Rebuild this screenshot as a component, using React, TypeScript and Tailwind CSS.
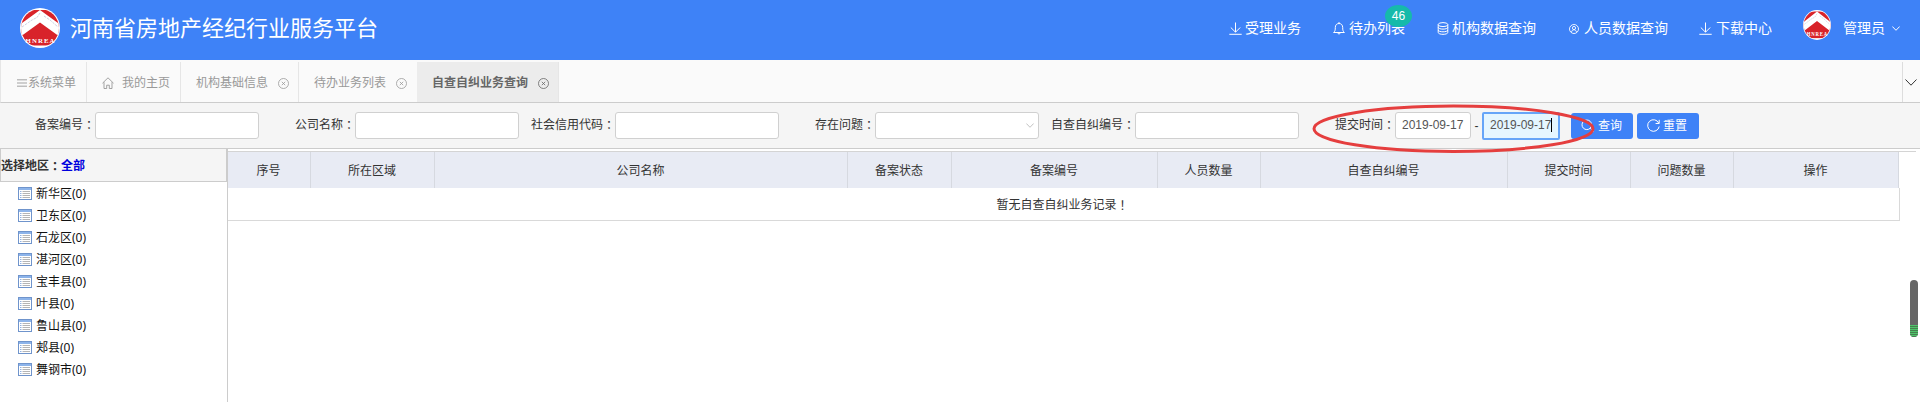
import type { ReactNode } from "react";

type IconProps = { className?: string };

function Logo({ className = "" }: IconProps) {
  return (
    <svg viewBox="0 0 40 40" preserveAspectRatio="none" className={className}>
      <defs>
        <clipPath id="disc">
          <circle cx="20" cy="20" r="19" />
        </clipPath>
      </defs>
      <circle cx="20" cy="20" r="20" fill="#fff" />
      <g clipPath="url(#disc)">
        <rect y="2" width="40" height="35.5" fill="#d8232a" />
        <path d="M20 2 L42 18 V30.5 L20 14.5 L-2 30.5 V18 Z" fill="#fff" />
        <path d="M2 19 L12 12 L17 9.5 L20 5 M24 8 L30 12 L38 19" stroke="#b9bfd4" strokeWidth=".7" fill="none" strokeDasharray="2.5 1" />
      </g>
      <text x="20" y="35" textAnchor="middle" textLength="29" fontSize="6.8" fontWeight="700" fontFamily="Liberation Serif, serif" fill="#fff">
        HNREA
      </text>
    </svg>
  );
}

function DownIcon() {
  return (
    <svg viewBox="0 0 13 13" className="h-[13px] w-[13px]" fill="none" stroke="currentColor">
      <path d="M6.5 .5V10M1.8 5.5l4.7 4.7 4.7-4.7M.3 12.3h12.4" />
    </svg>
  );
}

function BellIcon() {
  return (
    <svg viewBox="0 0 12 13" className="h-[13px] w-3" fill="none" stroke="currentColor">
      <path d="M.6 10.5C2.2 9 2.3 8 2.3 5.5C2.3 3 3.8 1.5 6 1.5S9.7 3 9.7 5.5C9.7 8 9.8 9 11.4 10.5ZM6 0v1.5M4.8 10.7c.2 1.8 2.2 1.8 2.4 0" />
    </svg>
  );
}

function DataIcon() {
  return (
    <svg viewBox="0 0 12 13" className="h-[13px] w-3" fill="none" stroke="currentColor">
      <ellipse cx="6" cy="2.6" rx="4.8" ry="2" />
      <path d="M1.2 2.6v7.8c0 2.6 9.6 2.6 9.6 0V2.6M1.2 5.3c0 2.4 9.6 2.4 9.6 0M1.2 8c0 2.4 9.6 2.4 9.6 0" />
    </svg>
  );
}

function PersonIcon() {
  return (
    <svg viewBox="0 0 10 10" className="h-2.5 w-2.5" fill="none" stroke="currentColor" strokeWidth=".9">
      <circle cx="5" cy="5" r="4.5" />
      <circle cx="5" cy="4" r="1.6" />
      <path d="M2.5 8.2c.3-3.2 4.7-3.2 5 0" />
    </svg>
  );
}

function Chevron({ className = "" }: IconProps) {
  return (
    <svg viewBox="0 0 12 7" className={className} fill="none" stroke="currentColor">
      <path d="M.5 .5 6 6.2 11.5 .5" vectorEffect="non-scaling-stroke" />
    </svg>
  );
}

function CloseIcon() {
  return (
    <svg viewBox="0 0 11 11" className="relative top-px h-[11px] w-[11px]" fill="none" stroke="currentColor" strokeWidth=".8">
      <circle cx="5.5" cy="5.5" r="5" />
      <path d="M3.8 3.8l3.4 3.4M7.2 3.8l-3.4 3.4" />
    </svg>
  );
}

function HomeIcon() {
  return (
    <svg viewBox="0 0 12 12" className="mr-2 h-3 w-3" fill="none" stroke="currentColor" strokeWidth=".9">
      <path d="M.5 6.2 6 .8l5.5 5.4M2 5.2v6.3h2.7V8.2h2.6v3.3H10V5.2" />
    </svg>
  );
}

function ListIcon() {
  return (
    <svg viewBox="0 0 14 13" className="mr-1 h-[13px] w-3.5 shrink-0">
      <rect x=".5" y=".5" width="13" height="12" fill="#fff" stroke="#6f94cc" />
      <rect x="1" y="1" width="12" height="2" fill="#8db4ea" />
      <path d="M2 4.5h1.5M2 6.5h1.5M2 8.5h1.5M2 10.5h1.5" stroke="#8fb0e0" />
      <path d="M4.5 4.5h7.5M4.5 6.5h7.5M4.5 8.5h7.5M4.5 10.5h7.5" stroke="#b5b5b5" />
    </svg>
  );
}

function NavItem({ className, gap, icon, children }: { className: string; gap: string; icon: ReactNode; children: ReactNode }) {
  return (
    <a className={`flex h-full shrink-0 items-center ${gap} ${className}`}>
      {icon}
      <span className="relative -top-px">{children}</span>
    </a>
  );
}

function Tab({ className, children, closable }: { className: string; children: ReactNode; closable?: boolean }) {
  return (
    <div className={`flex h-full shrink-0 items-center border-r border-[#e6e6e6] ${className}`}>
      <span className="mr-2.5 flex items-center pt-0.5">{children}</span>
      {closable && <CloseIcon />}
    </div>
  );
}

function Label({ className, children }: { className: string; children: ReactNode }) {
  return (
    <label className={`flex shrink-0 justify-end pb-0.5 ${className}`}>
      {children}
      <span className="font-['Noto_Sans_CJK_TC',sans-serif]">：</span>
    </label>
  );
}

const box = "flex h-[27px] shrink-0 items-center rounded-[3px] border border-[#d0d0d0] bg-white";

const columns = [
  { name: "序号", w: "w-[83px]" },
  { name: "所在区域", w: "w-[124px]" },
  { name: "公司名称", w: "w-[413px]" },
  { name: "备案状态", w: "w-[104px]" },
  { name: "备案编号", w: "w-[206px]" },
  { name: "人员数量", w: "w-[103px]" },
  { name: "自查自纠编号", w: "w-[247px]" },
  { name: "提交时间", w: "w-[123px]" },
  { name: "问题数量", w: "w-[103px]" },
  { name: "操作", w: "w-[165px]" },
];

const regions = ["新华区", "卫东区", "石龙区", "湛河区", "宝丰县", "叶县", "鲁山县", "郏县", "舞钢市"];

export default function App() {
  return (
    <div className="relative flex h-[402px] w-[1920px] flex-col overflow-hidden bg-white font-['Liberation_Sans','Noto_Sans_CJK_SC',sans-serif] text-xs leading-4 text-[#333]">
      <header className="flex h-[60px] shrink-0 items-center bg-[#3e82f7] text-sm leading-5 text-white">
        <Logo className="mb-1 ml-5 h-10 w-10 shrink-0" />
        <h1 className="ml-2.5 w-[1159px] shrink-0 pb-0.5 text-[22px] leading-8">河南省房地产经纪行业服务平台</h1>
        <nav className="flex h-full shrink-0 items-center pb-[3px]">
          <NavItem className="w-[104px]" gap="gap-[3px]" icon={<DownIcon />}>受理业务</NavItem>
          <NavItem className="w-[104px]" gap="gap-1" icon={<BellIcon />}>
            待办列表
            <i className="absolute -top-[13px] left-9 flex h-[22px] w-[27px] items-center justify-center rounded-[50%] bg-[#16baaa] text-xs not-italic leading-none">46</i>
          </NavItem>
          <NavItem className="w-[132px]" gap="gap-[3px]" icon={<DataIcon />}>机构数据查询</NavItem>
          <NavItem className="w-[130px]" gap="gap-[5px]" icon={<PersonIcon />}>人员数据查询</NavItem>
          <NavItem className="w-[104px]" gap="gap-1" icon={<DownIcon />}>下载中心</NavItem>
          <Logo className="mb-[7px] h-[30px] w-7" />
          <span className="ml-3 pb-0.5">管理员</span>
          <Chevron className="ml-[7px] h-[5px] w-2" />
        </nav>
      </header>

      <div className="flex h-[43px] shrink-0 border-b border-l border-b-[#ccc] border-l-[#e6e6e6] bg-[#fafafa] pt-0.5 text-[#999]">
        <Tab className="w-[86px] pl-4">
          <svg viewBox="0 0 11 8" className="mr-px h-2 w-2.5" stroke="currentColor">
            <path d="M0 .5h11M0 4h11M0 7.5h11" />
          </svg>
          系统菜单
        </Tab>
        <Tab className="w-[94px] pl-[15px]"><HomeIcon />我的主页</Tab>
        <Tab className="w-[118px] pl-[15px]" closable>机构基础信息</Tab>
        <Tab className="w-[118px] border-r-0 pl-[15px]" closable>待办业务列表</Tab>
        <Tab className="w-[142px] bg-[#ececec] pl-[15px] font-bold text-[#666]" closable>自查自纠业务查询</Tab>
        <div className="ml-auto flex w-[18px] items-center border-l border-[#ddd] pl-0.5 text-[#333]">
          <Chevron className="h-[7px] w-3" />
        </div>
      </div>

      <div className="flex h-[46px] shrink-0 items-center border-b border-[#ccc] bg-[#f5f5f5]">
        <Label className="w-[95px]">备案编号</Label>
        <div className={`${box} w-[164px]`} />
        <Label className="w-24">公司名称</Label>
        <div className={`${box} w-[164px]`} />
        <Label className="w-24">社会信用代码</Label>
        <div className={`${box} w-[164px]`} />
        <Label className="w-24">存在问题</Label>
        <div className={`${box} w-[164px] justify-end pr-1 text-[#c2c2c2]`}>
          <Chevron className="h-[5px] w-2" />
        </div>
        <Label className="w-24">自查自纠编号</Label>
        <div className={`${box} w-[164px]`} />
        <Label className="w-24">提交时间</Label>
        <div className={`${box} w-[76px] pb-px pl-1.5 text-[#555]`}>2019-09-17</div>
        <span className="w-[11px] text-center">-</span>
        <div className="flex h-7 w-[78px] shrink-0 items-center rounded-[2px] border-2 border-[#66a5f8] bg-[#e5f6ff] pb-px pl-1.5 text-[#555]">
          2019-09-17
          <i className="h-[14px] w-px shrink-0 bg-black" />
        </div>
        <button className="ml-[11px] flex h-[26px] w-[62px] items-center rounded-[3px] bg-[#3e82f7] pl-2.5 text-white">
          <svg viewBox="0 0 13 13" className="mr-1 h-[13px] w-[13px]" fill="none" stroke="currentColor">
            <circle cx="5.8" cy="5.8" r="4.8" />
            <path d="M9.2 9.2l3.3 3.3" />
          </svg>
          查询
        </button>
        <button className="ml-1 flex h-[26px] w-[62px] items-center rounded-[3px] bg-[#3e82f7] pl-2.5 text-white">
          <svg viewBox="0 0 13 13" className="mr-[3px] h-[13px] w-[13px]" fill="none" stroke="currentColor">
            <path d="M11.8 4.2A5.8 5.8 0 1 0 12.2 7.5M12.2 .8V4.5H8.6" />
          </svg>
          重置
        </button>
      </div>

      <div className="flex min-h-0 flex-1">
        <aside className="w-[228px] shrink-0 border-r border-[#ccc]">
          <div className="flex h-[33px] items-center border border-t-0 border-[#ccc] bg-[#f5f5f5] pt-0.5 font-bold">
            <span className="flex">选择地区<span className="font-['Noto_Sans_CJK_TC',sans-serif]">：</span></span>
            <span className="text-[#0000dd]">全部</span>
          </div>
          <ul className="font-['Noto_Sans','Noto_Sans_CJK_SC',sans-serif] text-[#111]">
            {regions.map((r) => (
              <li key={r} className="flex h-[22px] items-center pl-[18px]">
                <ListIcon />
                <span className="pt-px">{r}(0)</span>
              </li>
            ))}
          </ul>
        </aside>
        <main className="flex-1 pt-0.5">
          <div className="flex w-[1688px] border-t border-[#d4d4d4]">
            {columns.map((c) => (
              <div key={c.name} className={`flex h-9 shrink-0 items-center justify-center border-r border-[#d6d9e0] bg-[#e8ebf4] pt-0.5 pr-px ${c.w}`}>
                {c.name}
              </div>
            ))}
          </div>
          <div className="flex h-[33px] w-[1672px] items-center justify-center border-r border-b border-[#d9d9d9] pt-0.5 pr-0.5">
            暂无自查自纠业务记录<span className="font-['Noto_Sans_CJK_TC',sans-serif]">！</span>
          </div>
        </main>
      </div>

      <svg viewBox="0 0 284 50" className="pointer-events-none absolute top-[104px] left-[1312px] h-[50px] w-[284px]" fill="none">
        <ellipse cx="141.5" cy="24.7" rx="139.5" ry="22.7" stroke="#e53e3e" strokeWidth="3" />
      </svg>

      <div className="absolute top-[280px] left-[1910px] flex h-[57px] w-2 flex-col justify-end overflow-hidden rounded-full bg-[#666]">
        <div className="h-3 bg-[repeating-linear-gradient(#4fc46b_0px,#4fc46b_1px,#46804f_1px,#46804f_2px)]" />
      </div>
    </div>
  );
}
